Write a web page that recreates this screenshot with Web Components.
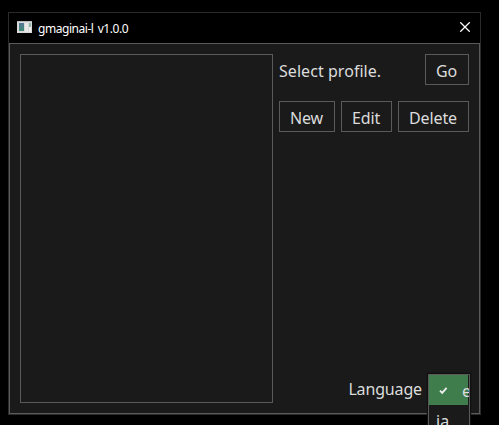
<!DOCTYPE html>
<html lang="en">
<head>
<meta charset="utf-8">
<title>gmaginai-l</title>
<style>
html,body{margin:0;height:100%;background:#000;overflow:hidden}
body{font-family:"Noto Sans","Open Sans",sans-serif;font-size:16px;color:#dcdcdc}
</style>
</head>
<body>
<launcher-app></launcher-app>
<script>
const define = (name, html) => {
  const tpl = document.createElement('template');
  tpl.innerHTML = html;
  customElements.define(name, class extends HTMLElement {
    constructor() {
      super();
      this.attachShadow({mode: 'open'}).append(tpl.content.cloneNode(true));
    }
  });
};

define('title-bar', `
<style>
:host{display:flex;align-items:center;height:30px;background:#000;color:#fff;padding:0 10px 0 8px;font-size:12px}
.caption{margin-left:6px;letter-spacing:-.45px;word-spacing:1.5px;white-space:nowrap}
.close{margin-left:auto;margin-right:0;margin-top:-2px}
svg{display:block}
.icon{margin-top:-2px}
</style>
<svg class="icon" width="15" height="12" viewBox="0 0 15 12" shape-rendering="crispEdges">
<defs><linearGradient id="g" x1="0" y1="0" x2="0" y2="1"><stop stop-color="#55779b"/><stop offset="1" stop-color="#3e8a72"/></linearGradient></defs>
<rect width="15" height="12" fill="#d9d9d9"/><rect width="15" height="1" fill="#b8b8bc"/>
<rect x="2" y="2" width="5" height="8" fill="url(#g)"/><rect x="8" y="2" width="3" height="9" fill="#e8e8e8"/>
<rect x="12" y="2" width="2" height="4" fill="#8fb5ac"/><rect x="12" y="6" width="2" height="5" fill="#eee"/>
</svg>
<span class="caption"><slot></slot></span>
<svg class="close" width="10" height="10" viewBox="0 0 10 10"><path d="M.3.3 9.7 9.7M9.7.3.3 9.7" stroke="#fff" stroke-width="1.25"/></svg>`);

define('app-window', `
<style>
:host{display:flex;flex-direction:column;box-sizing:border-box;width:473px;height:403px;border:1px solid #2b2b2b}
.body{flex:1;min-height:0;box-sizing:border-box;border:1px solid #5a5a5a;background:#1a1a1a;padding:10px;display:flex;gap:6px}
</style>
<slot name="title"></slot>
<div class="body"><slot></slot></div>`);

define('profile-list', `<style>:host{display:block;box-sizing:border-box;width:253px;flex:none;border:1px solid #5a5a5a}</style><slot></slot>`);

define('push-button', `
<style>:host{display:flex;align-items:center;justify-content:center;box-sizing:border-box;height:31px;width:var(--w);border:1px solid #5a5a5a;white-space:nowrap;padding:2px 1px 0 0;letter-spacing:-.1px}</style>
<slot></slot>`);

define('side-panel', `
<style>
:host{display:flex;flex-direction:column;width:190px}
.row{display:flex;justify-content:space-between;align-items:center;height:31px}
.actions{margin-top:16px}
.footer{margin-top:auto;justify-content:flex-end;padding-right:47px;height:30px}
</style>
<div class="row"><slot name="status"></slot><slot name="go"></slot></div>
<div class="row actions"><slot name="actions"></slot></div>
<div class="row footer"><slot name="language"></slot></div>`);

define('text-label', `<style>:host{display:block;white-space:nowrap;letter-spacing:var(--ls,0);padding-top:2px}</style><slot></slot>`);

define('language-menu', `
<style>
:host{position:absolute;left:428px;top:374px;width:42px;height:60px;box-sizing:border-box;border:1px solid #5a5a5a;background:#1a1a1a;overflow:hidden;box-shadow:0 0 1px 1px #101010}
.item{display:flex;align-items:center;height:30px;box-sizing:border-box;white-space:nowrap}
.selected{background:#3f7d4d;width:39px;padding-left:10px;padding-top:2px}
.selected svg{margin-top:-2px;flex:none}
.selected span{margin-left:14px}
.other{padding:2px 0 0 7px}
</style>
<div class="item selected"><svg width="9" height="9" viewBox="0 0 9 9"><path d="M1 4.6 3.2 6.8 7.6 1.8" fill="none" stroke="#eee" stroke-width="1.9"/></svg><span>en</span></div>
<div class="item other">ja</div>`);

define('launcher-app', `
<style>
:host{display:block;width:499px;height:425px;box-sizing:border-box;padding:12px 0 0 8px;position:relative;overflow:hidden}
</style>
<app-window>
<title-bar slot="title">gmaginai-l v1.0.0</title-bar>
<profile-list></profile-list>
<side-panel>
<text-label slot="status" style="--ls:.05px">Select profile.</text-label>
<push-button slot="go" style="--w:44px">Go</push-button>
<push-button slot="actions" style="--w:56px">New</push-button>
<push-button slot="actions" style="--w:51px">Edit</push-button>
<push-button slot="actions" style="--w:71px">Delete</push-button>
<text-label slot="language" style="--ls:-.15px">Language</text-label>
</side-panel>
</app-window>
<language-menu></language-menu>`);
</script>
</body>
</html>
